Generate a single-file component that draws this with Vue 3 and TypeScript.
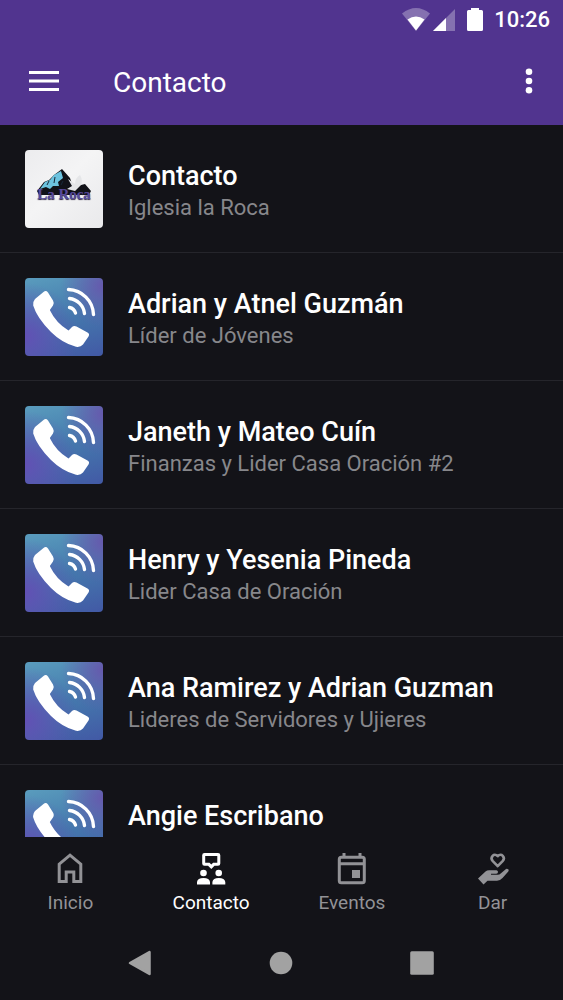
<script setup lang="ts">
interface Contact {
  name: string
  role: string
  logo?: boolean
}

const contacts: Contact[] = [
  { name: 'Contacto', role: 'Iglesia la Roca', logo: true },
  { name: 'Adrian y Atnel Guzmán', role: 'Líder de Jóvenes' },
  { name: 'Janeth y Mateo Cuín', role: 'Finanzas y Lider Casa Oración #2' },
  { name: 'Henry y Yesenia Pineda', role: 'Lider Casa de Oración' },
  { name: 'Ana Ramirez y Adrian Guzman', role: 'Lideres de Servidores y Ujieres' },
  { name: 'Angie Escribano', role: '' },
]

const tabs = [
  { id: 'home', label: 'Inicio' },
  { id: 'contact', label: 'Contacto' },
  { id: 'events', label: 'Eventos' },
  { id: 'give', label: 'Dar' },
]
const activeTab = 'contact'
</script>

<template>
  <div class="app">
    <header class="header">
      <div class="status">
        <svg class="wifi" width="28" height="24" viewBox="0 0 28 24" aria-hidden="true">
          <path d="M0 5.500Q14-5.500 28 5.500L14 23Z" fill="#fff" fill-opacity=".3" />
          <path d="M5.500 11.500Q14 5.500 22.500 11.500L14 22.500Z" fill="#fff" />
        </svg>
        <svg class="signal" width="23" height="24" viewBox="0 0 23 24" aria-hidden="true">
          <path d="M23 1V23H1Z" fill="#fff" fill-opacity=".3" />
          <path d="M14 10V23H1Z" fill="#fff" />
        </svg>
        <svg class="battery" width="16" height="24" viewBox="0 0 16 24" aria-hidden="true">
          <path d="M4 0H12V2H14.500Q16 2 16 3.500V21.500Q16 23 14.500 23H1.500Q0 23 0 21.500V3.500Q0 2 1.500 2H4Z" fill="#fff" />
        </svg>
        <span class="time">10:26</span>
      </div>
      <div class="toolbar">
        <button class="icon-button" type="button" aria-label="Menú">
          <svg width="30" height="22" viewBox="0 0 30 22">
            <path d="M0 2.500H30M0 11H30M0 19.500H30" stroke="#fff" stroke-width="3" />
          </svg>
        </button>
        <h1 class="title">Contacto</h1>
        <button class="icon-button" type="button" aria-label="Más opciones">
          <svg width="8" height="26" viewBox="0 0 8 26">
            <g fill="#fff">
              <circle cx="4" cy="3.700" r="3.300" />
              <circle cx="4" cy="13" r="3.300" />
              <circle cx="4" cy="22.300" r="3.300" />
            </g>
          </svg>
        </button>
      </div>
    </header>

    <main class="content">
      <ul class="list">
        <li v-for="contact in contacts" :key="contact.name" class="row">
          <div v-if="contact.logo" class="avatar logo">
            <svg class="mountain" viewBox="0 0 78 78" aria-hidden="true">
              <path d="M12 41L19 32L24 30L29 25L37 19L45 28L48 37L60 34L66 41L64 45H14Z" fill="#111218" />
              <path d="M15 39L20 32L25 30L29 25L36 21L38 28L33 32L34 36L28 36L25 39L21 37Z" fill="#6cc3df" />
              <path d="M38 31L36 35M24 31L22 35M30 27L29 33" stroke="#17293a" stroke-width="1" />
              <path d="M43 29L50 34Q50 28 55 25Q58 30 56 35L50 41L42 39L47 36Z" fill="#e5e6e8" />
            </svg>
            <span class="logo-name">La Roca</span>
          </div>
          <div v-else class="avatar call">
            <svg viewBox="0 0 78 78" aria-hidden="true">
              <path d="M18.500 14Q21 12 23 14.500L28 22.500Q29.500 25 28 27.500L24.800 32Q31 45 43.500 52.500L47 49Q49 47.300 51.500 48.500L62.500 54.500Q65 56 63.500 58.500L58 66.500Q55.500 69.500 51 68.800Q37 65 26 54Q12 40 8.200 27.500Q7.500 24 10 21Z" fill="#fff" />
              <g fill="none" stroke="#fff" stroke-width="3.400" stroke-linecap="round">
                <path d="M43.500 11.500A26 26 0 0 1 68.500 36.500" />
                <path d="M44.500 20.500A17 17 0 0 1 59.500 35.500" />
                <path d="M44.500 29.500A8 8 0 0 1 50.500 35" />
              </g>
            </svg>
          </div>
          <div class="text">
            <h2 class="name">{{ contact.name }}</h2>
            <p class="role">{{ contact.role }}</p>
          </div>
        </li>
      </ul>
    </main>

    <nav class="tabs" aria-label="Principal">
      <a
        v-for="tab in tabs"
        :key="tab.id"
        href="#"
        class="tab"
        :class="{ active: tab.id === activeTab }"
        :aria-current="tab.id === activeTab ? 'page' : undefined"
      >
        <svg width="34" height="34" viewBox="0 0 34 34" aria-hidden="true">
          <path
            v-if="tab.id === 'home'"
            d="M6.200 30.500V13.200L17 4.200L27.800 13.200V30.500H20.800V21H13.200V30.500Z"
            fill="none" stroke="currentColor" stroke-width="3"
          />
          <g v-else-if="tab.id === 'contact'" fill="currentColor">
            <path d="M10.500 2H24Q26.300 2 26.300 4.300V12.500Q26.300 14.700 24 14.700H20.500L17.300 18L14 14.700H10.500Q8.200 14.700 8.200 12.500V4.300Q8.200 2 10.500 2ZM11.200 5V11.700H15.500L17.300 13.500L19.100 11.700H23.300V5Z" fill-rule="evenodd" />
            <circle cx="9.500" cy="22" r="3.300" />
            <circle cx="24.700" cy="22" r="3.300" />
            <path d="M3 33.500V31Q3.500 27 9.500 27T16 31V33.500ZM18.400 33.500V31Q18.900 27 24.800 27T31.300 31V33.500Z" />
          </g>
          <g v-else-if="tab.id === 'events'">
            <rect x="4.300" y="6.300" width="25" height="25.500" rx="2" fill="none" stroke="currentColor" stroke-width="3" />
            <path d="M7.500 2H10.500V6H7.500ZM23.500 2H26.500V6H23.500ZM5 11.200H29V14.200H5ZM17 19H25V27H17Z" fill="currentColor" />
          </g>
          <g v-else>
            <path d="M21.700 15.200L16.800 10.200C13.500 6.600 18 1.200 21.700 5.200C25.400 1.200 29.900 6.600 26.600 10.200Z" fill="none" stroke="currentColor" stroke-width="2.600" stroke-linejoin="round" />
            <path d="M2 27.500L9.500 20.500Q11 19.200 13 19.200H20.500Q22.300 19.500 22 21.200Q21.500 22.800 20 22.800H15V23.800H21.500Q23.500 23.800 25 22.300L30 17.900Q31.200 17.300 32.300 18.300Q33.200 19.300 32.300 20.400L26.500 27Q24 29.800 21 29.800H11.500L7.500 33.500Z" fill="currentColor" />
          </g>
        </svg>
        <span>{{ tab.label }}</span>
      </a>
    </nav>

    <div class="system">
      <button type="button" aria-label="Atrás">
        <svg width="26" height="26" viewBox="0 0 26 26">
          <path d="M22.500 2V24L3 13Z" fill="currentColor" stroke="currentColor" stroke-width="2.500" stroke-linejoin="round" />
        </svg>
      </button>
      <button type="button" aria-label="Inicio del sistema">
        <svg width="26" height="26" viewBox="0 0 26 26"><circle cx="13" cy="13" r="11.300" fill="currentColor" /></svg>
      </button>
      <button type="button" aria-label="Recientes">
        <svg width="26" height="26" viewBox="0 0 26 26"><rect x="1.200" y="1.200" width="23.600" height="23.600" rx="1.500" fill="currentColor" /></svg>
      </button>
    </div>
  </div>
</template>

<style>
body {
  margin: 0;
  background: #131318;
}
</style>

<style scoped>
.app {
  display: flex;
  flex-direction: column;
  height: 100vh;
  overflow: hidden;
  background: #131318;
  color: #fff;
  font-family: Roboto, "Liberation Sans", sans-serif;
}

svg {
  display: block;
}

button {
  padding: 0;
  border: 0;
  background: none;
  color: inherit;
}

.header {
  flex: none;
  background: #51348f;
}

.status {
  display: flex;
  align-items: center;
  justify-content: flex-end;
  height: 40px;
  padding-right: 13px;
}

.signal {
  margin-left: 2px;
}

.battery {
  margin: 0 11px 0 12px;
}

.time {
  font-size: 22px;
  font-weight: 500;
  line-height: 24px;
}

.toolbar {
  display: flex;
  align-items: center;
  height: 85px;
  padding: 0 30px 4px 29px;
  box-sizing: border-box;
}

.title {
  flex: 1;
  margin: 0 0 0 54px;
  padding-top: 4px;
  font-size: 28px;
  font-weight: 400;
  line-height: 32px;
}

.content {
  flex: 1;
  min-height: 0;
  overflow: hidden;
}

.list {
  margin: 0;
  padding: 0;
  list-style: none;
}

.row {
  display: flex;
  gap: 25px;
  padding: 25px 25px 24px;
  border-bottom: 1px solid #25252b;
}

.avatar {
  position: relative;
  flex: none;
  width: 78px;
  height: 78px;
  border-radius: 4px;
  overflow: hidden;
}

.logo {
  background: linear-gradient(135deg, #ececee, #f4f4f5 45%, #e9e9eb);
}

.logo-name {
  position: absolute;
  top: 35px;
  right: 0;
  left: 0;
  color: #574a9c;
  font-family: "Liberation Serif", serif;
  font-size: 15px;
  font-weight: 700;
  line-height: 18px;
  text-align: center;
  text-shadow: 0 1px 1px #29213f;
}

.call {
  background:
    radial-gradient(circle at 0 75%, #6250b4, transparent 55%),
    radial-gradient(circle at 100% 10%, #6659ad, transparent 40%),
    linear-gradient(165deg, #5a9cbd, #4479ad 50%, #4259a5);
}

.text {
  min-width: 0;
  padding-top: 9px;
}

.name {
  margin: 0;
  font-size: 27px;
  font-weight: 500;
  line-height: 34px;
  white-space: nowrap;
}

.role {
  margin: 0;
  color: #87878b;
  font-size: 22px;
  line-height: 30px;
  white-space: nowrap;
}

.tabs {
  display: flex;
  flex: none;
  height: 88px;
}

.tab {
  display: flex;
  flex: 1;
  flex-direction: column;
  align-items: center;
  gap: 6px;
  padding-top: 14px;
  color: #929296;
  font-size: 19px;
  line-height: 24px;
  text-decoration: none;
}

.active {
  color: #fff;
}

.system {
  display: flex;
  flex: none;
  align-items: center;
  justify-content: space-between;
  height: 75px;
  padding: 0 128px 0 127px;
  color: #a2a2a2;
}
</style>
